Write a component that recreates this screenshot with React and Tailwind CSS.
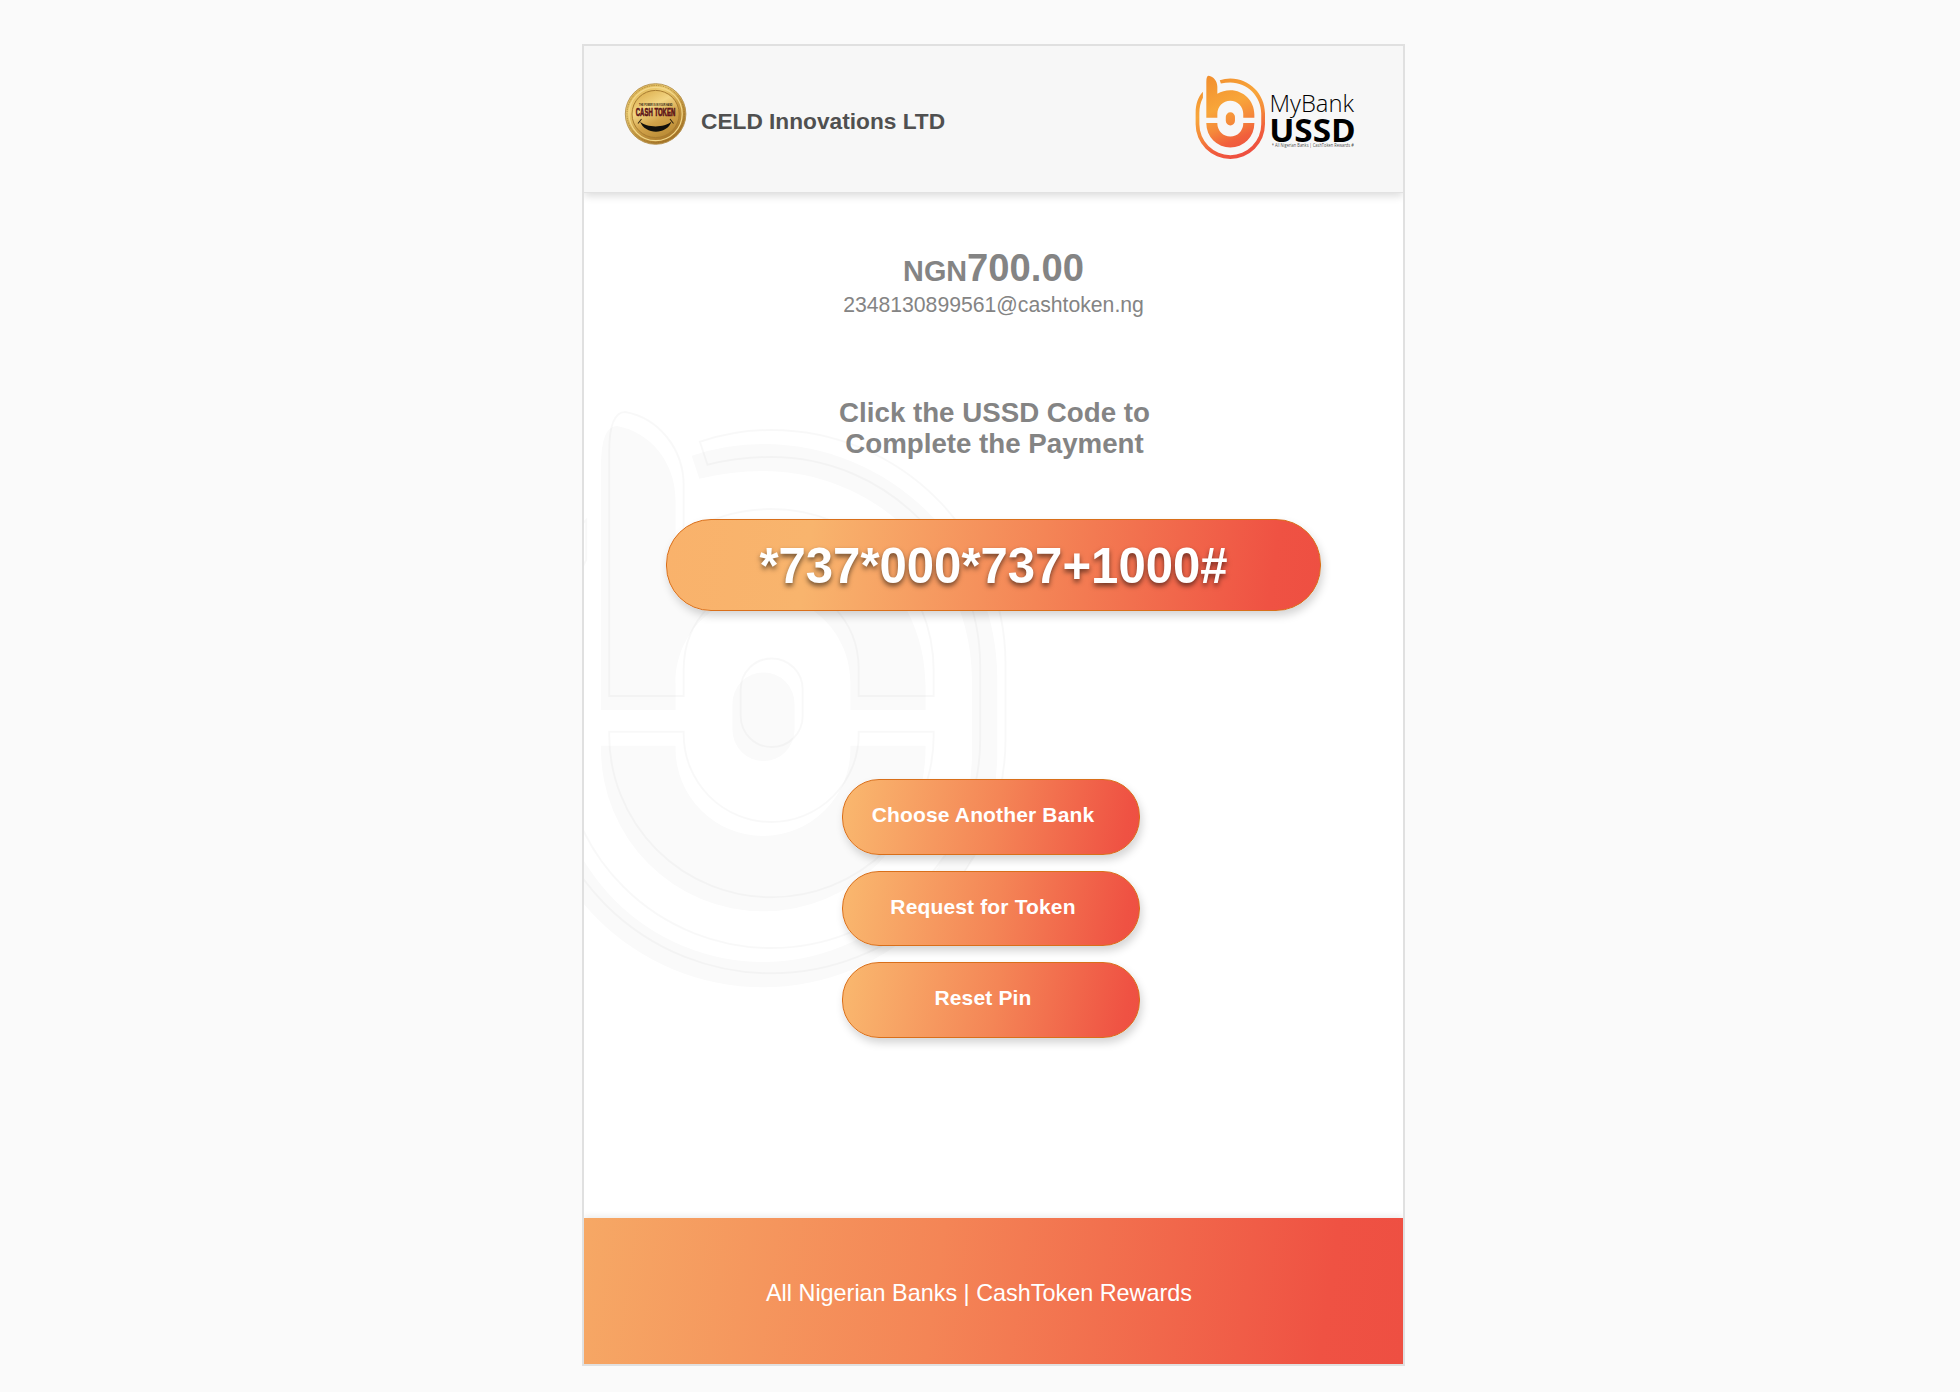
import React from "react";

const MARK_FILL =
  "M601 710V466Q601 426 617 426C650 432 675.5 462 675.5 500V548C702 532 731 523 763 523C853 523 925.5 596 925.5 685V710H850.5V683C850.5 634 812 595 763 595C714 595 675.5 634 675.5 683V710Z" +
  "M601 745.7H675.5V748.5A87.5 87.5 0 0 0 850.5 748.5V745.7H925.5V749A162 162 0 0 1 601 749Z" +
  "M732.5 703.5A31 31 0 0 1 794.5 703.5V730A31 31 0 0 1 732.5 730Z" +
  "M691.7 455.7Q727 444 763 444C892 444 997.3 549 997.3 678V753A234.3 234.3 0 0 1 528.7 753V678C528.7 619 545 568 578 534V574C562 604 554 640 554 678V753A209 209 0 0 0 972 753V680C972 565 878 471 763 471Q731 471 699.3 478.7Z";

function Watermark() {
  return (
    <svg
      className="pointer-events-none absolute left-0 top-0 h-[1024px] w-[819px]"
      viewBox="584 193 819 1024"
      aria-hidden="true"
    >
      <path d={MARK_FILL} fill="#fafafa" />
      <path d={MARK_FILL} transform="translate(8.2 -14)" fill="none" stroke="#000" strokeOpacity="0.028" strokeWidth="2" />
    </svg>
  );
}

function CoinLogo() {
  return (
    <svg className="h-[64px] w-[64px]" viewBox="0 0 64 64" role="img" aria-label="Cash Token">
      <defs>
        <linearGradient id="coin" x1="0.1" y1="0" x2="0.8" y2="1">
          <stop offset="0" stopColor="#d9ac4c" />
          <stop offset="0.3" stopColor="#efcf74" />
          <stop offset="0.6" stopColor="#c79a42" />
          <stop offset="1" stopColor="#a06c20" />
        </linearGradient>
        <linearGradient id="face" x1="0.2" y1="0" x2="0.7" y2="1">
          <stop offset="0" stopColor="#dcae4d" />
          <stop offset="0.35" stopColor="#f2d583" />
          <stop offset="0.65" stopColor="#d2a34a" />
          <stop offset="1" stopColor="#b98a34" />
        </linearGradient>
      </defs>
      <circle cx="31.600" cy="32" r="30.3" fill="url(#coin)" stroke="#b3914f" strokeWidth="0.9" />
      <circle cx="31.600" cy="32" r="28.6" fill="none" stroke="#94702d" strokeWidth="0.7" strokeDasharray="1 0.8" />
      <circle cx="31.600" cy="32" r="26.6" fill="none" stroke="#f3d88a" strokeWidth="1.2" />
      <circle cx="31.600" cy="32" r="23.6" fill="url(#face)" stroke="#a87c30" strokeWidth="1" />
      <text x="15" y="24" fontSize="3.2" fontWeight="700" textLength="33.5" lengthAdjust="spacingAndGlyphs" fill="#2d2010" fontFamily="Liberation Sans, sans-serif">
        THE POWER IS IN YOUR HAND
      </text>
      <text x="11.800" y="34.200" fontSize="10.8" fontWeight="700" textLength="39.4" lengthAdjust="spacingAndGlyphs" fill="#6d1420" stroke="#4a0d12" strokeWidth="0.6" fontFamily="Liberation Sans, sans-serif">
        CASH TOKEN
      </text>
      <path d="M16 39.500C23 46 40 46 47.500 39.500C43 53 21 53 16 39.500Z" fill="#11100c" />
      <path d="M14 41.500L17.500 37M49.500 41.500L46 37" stroke="#33240f" strokeWidth="1.100" />
    </svg>
  );
}

function BankLogo() {
  return (
    <svg className="h-[90px] w-[164px]" viewBox="0 0 164 90" role="img" aria-label="MyBank USSD">
      <defs>
        <linearGradient id="mark" gradientUnits="userSpaceOnUse" x1="640" y1="430" x2="870" y2="950">
          <stop offset="0" stopColor="#f2902f" />
          <stop offset="0.38" stopColor="#f8a63a" />
          <stop offset="0.6" stopColor="#f58a3a" />
          <stop offset="0.8" stopColor="#f1603c" />
          <stop offset="1" stopColor="#ee4f40" />
        </linearGradient>
      </defs>
      <g transform="translate(36.300 48.500) scale(0.148) translate(-763 -728)">
        <path d={MARK_FILL} fill="url(#mark)" />
      </g>
      <g fill="#000" fontFamily="'Open Sans', 'Noto Sans', sans-serif">
        <text x="75.500" y="39.700" fontSize="24" fontWeight="300" textLength="84.500" lengthAdjust="spacingAndGlyphs">
          MyBank
        </text>
        <text x="75.200" y="69.600" fontSize="33" fontWeight="700" textLength="86.500" lengthAdjust="spacingAndGlyphs">
          USSD
        </text>
        <text x="77.800" y="74.600" fontSize="4.400" fillOpacity="0.75" textLength="82" lengthAdjust="spacingAndGlyphs">
          * All Nigerian Banks | CashToken Rewards #
        </text>
      </g>
    </svg>
  );
}

function ActionButton({ children }) {
  return (
    <button className="flex h-[75.500px] w-[298px] items-center justify-center rounded-[37px] border-[1.500px] border-[#d96f1a] bg-[linear-gradient(100deg,#f9b56d_4%,#f48556_52%,#ef5243_94%,#ee4f42_100%)] bg-origin-border pb-[3px] pr-4 text-[21px] leading-[30px] font-bold tracking-[0.150px] text-white shadow-[2px_5px_9px_rgba(0,0,0,0.17)]">
      {children}
    </button>
  );
}

export default function App() {
  return (
    <div className="h-[1392px] w-[1960px] overflow-hidden bg-[#fafafa] pl-[582px] pt-11 font-['Liberation_Sans',Arial,sans-serif]">
      <div className="flex h-[1322px] w-[823px] flex-col overflow-hidden border-2 border-[#e0e0e0] bg-white">
        <header className="z-10 flex h-[147px] shrink-0 justify-between border-b border-[#e2e2e2] bg-[#f7f7f7] pl-[39.500px] pr-[45px] shadow-[0_3px_8px_rgba(0,0,0,0.14)]">
          <div className="flex">
            <div className="pt-9">
              <CoinLogo />
            </div>
            <h1 className="ml-[13.500px] pt-[61px] text-[22.700px] leading-7 font-bold text-[#505050]">
              CELD Innovations LTD
            </h1>
          </div>
          <div className="pt-[26px]">
            <BankLogo />
          </div>
        </header>

        <main className="relative flex h-[1025px] shrink-0 flex-col items-center overflow-hidden pt-[53px]">
          <Watermark />
          <p className="relative h-[44.500px] text-[38.200px] leading-[44px] font-bold text-[#848484]">
            <span className="text-[28.800px]">NGN</span>700.00
          </p>
          <p className="relative text-[21.200px] leading-7 text-[#848484]">2348130899561@cashtoken.ng</p>
          <h2 className="relative mt-[79.500px] pl-0.5 text-center text-[27.700px] leading-[30.500px] font-bold text-[#848484]">
            Click the USSD Code to
            <br />
            Complete the Payment
          </h2>
          <button className="relative mt-[60px] flex h-[91.500px] w-[655px] shrink-0 items-center justify-center rounded-[45px] border-[1.500px] border-[#d96f1a] bg-[linear-gradient(98deg,#f9b26b_0%,#f8b46d_22%,#f48556_57%,#ef5243_92%,#ee4f42_100%)] bg-origin-border pt-[3px] text-[49.100px] leading-[60px] font-bold text-white shadow-[2px_5px_9px_rgba(0,0,0,0.17)] [text-shadow:0_3px_5px_rgba(0,0,0,0.55)]">
            *737*000*737+1000#
          </button>
          <div className="relative mr-[5px] mt-[168.500px] flex flex-col gap-4">
            <ActionButton>Choose Another Bank</ActionButton>
            <ActionButton>Request for Token</ActionButton>
            <ActionButton>Reset Pin</ActionButton>
          </div>
        </main>

        <footer className="z-10 flex h-[146px] shrink-0 items-center justify-center bg-[linear-gradient(98deg,#f6a865_0%,#f48556_43%,#ef5243_90%,#ee4f42_100%)] pr-[29px] pt-[5px] text-[23.400px] text-white shadow-[0_-2px_6px_rgba(0,0,0,0.08)]">
          All Nigerian Banks | CashToken Rewards
        </footer>
      </div>
    </div>
  );
}
